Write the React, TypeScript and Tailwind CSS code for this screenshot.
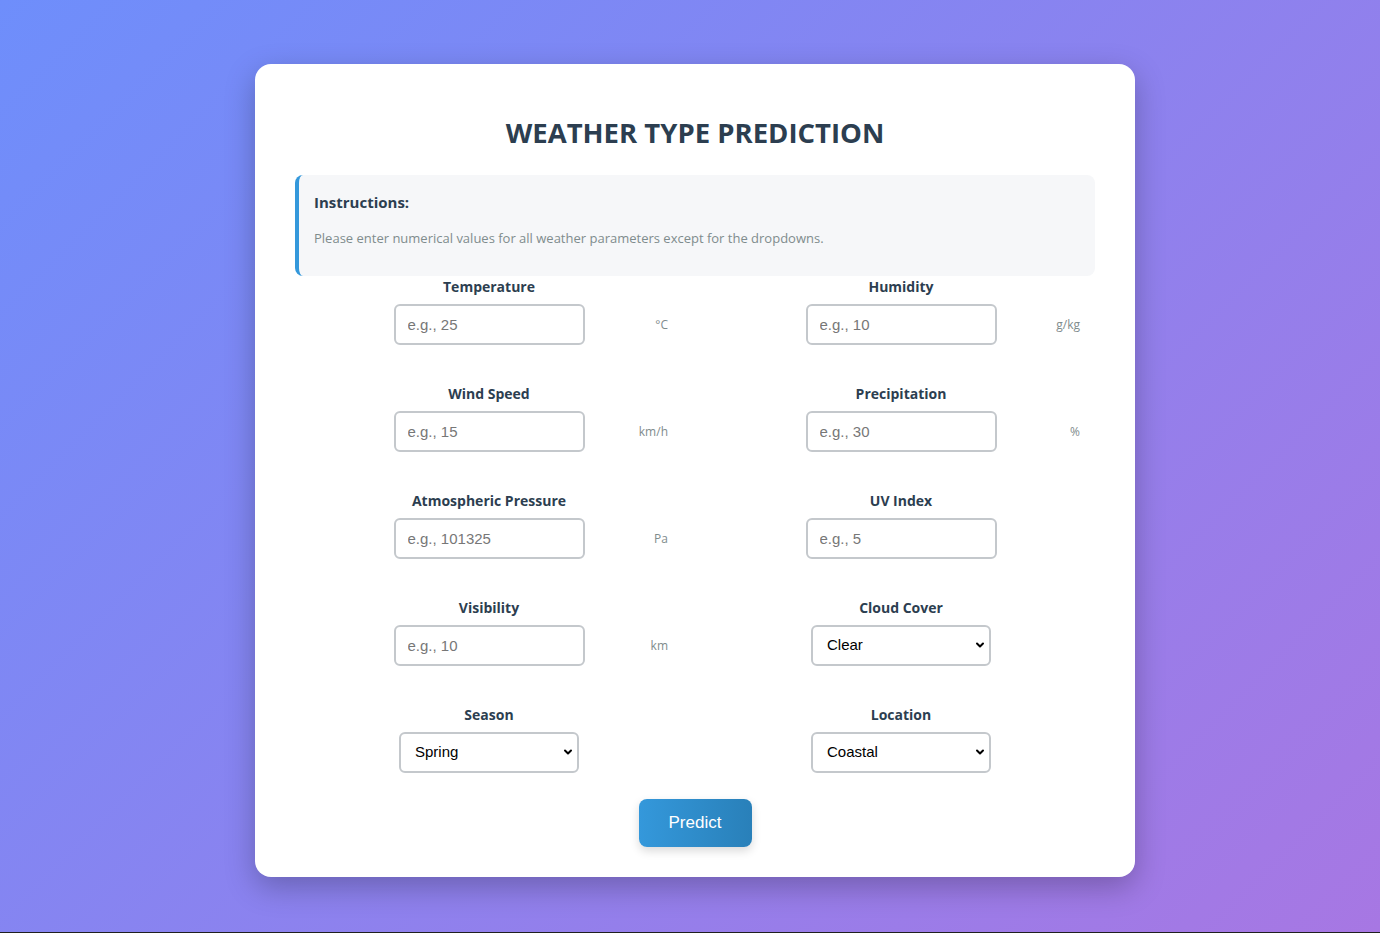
import { ChevronDown } from "lucide-react";

const fields = [
  { label: "Temperature", placeholder: "e.g., 25", unit: "°C" },
  { label: "Humidity", placeholder: "e.g., 10", unit: "g/kg" },
  { label: "Wind Speed", placeholder: "e.g., 15", unit: "km/h" },
  { label: "Precipitation", placeholder: "e.g., 30", unit: "%" },
  { label: "Atmospheric Pressure", placeholder: "e.g., 101325", unit: "Pa" },
  { label: "UV Index", placeholder: "e.g., 5", unit: "" },
  { label: "Visibility", placeholder: "e.g., 10", unit: "km" },
];

const selects = [
  { label: "Cloud Cover", options: ["Clear", "Partly Cloudy", "Cloudy", "Overcast"] },
  { label: "Season", options: ["Spring", "Summer", "Autumn", "Winter"] },
  { label: "Location", options: ["Coastal", "Inland", "Mountain"] },
];

function Label({ children }: { children: React.ReactNode }) {
  return (
    <label className="mb-[7px] block text-center text-[14px] font-bold leading-[20px] text-[#2c3e50]">
      {children}
    </label>
  );
}

function NumberField({ label, placeholder, unit }: { label: string; placeholder: string; unit: string }) {
  return (
    <div>
      <Label>{label}</Label>
      <div className="grid grid-cols-[1fr_auto_1fr] items-center">
        <div />
        <input
          type="text"
          placeholder={placeholder}
          className="h-[41px] w-[191px] rounded-[6px] border-2 border-[#c4c8cc] bg-white px-[12px] font-['Liberation_Sans',Arial,sans-serif] text-[15px] text-black outline-none placeholder:text-[#777]"
        />
        <span className="justify-self-end pr-[15px] text-[12px] text-[#7f8c8d]">{unit}</span>
      </div>
    </div>
  );
}

function SelectField({ label, options }: { label: string; options: string[] }) {
  return (
    <div>
      <Label>{label}</Label>
      <div className="flex justify-center">
        <div className="relative">
          <select className="h-[41px] w-[180px] appearance-none rounded-[6px] border-2 border-[#c4c8cc] bg-white pl-[14px] font-['Liberation_Sans',Arial,sans-serif] text-[15px] text-black outline-none">
            {options.map((o) => (
              <option key={o}>{o}</option>
            ))}
          </select>
          <ChevronDown
            className="pointer-events-none absolute right-[5px] top-[14px] h-[12px] w-[12px] text-black"
            strokeWidth={4}
          />
        </div>
      </div>
    </div>
  );
}

export default function App() {
  const [cloud, season, location] = selects;
  return (
    <div className="flex flex-col font-['Open_Sans','Noto_Sans',sans-serif]">
      <div className="h-[932px] bg-[linear-gradient(135deg,#6e8efb,#a777e3)] pl-[10px] pt-[64px]">
        <div className="mx-auto w-[880px] rounded-[16px] bg-white px-[40px] pb-[30px] pt-[52px] shadow-[0_10px_30px_rgba(0,0,0,0.25)]">
          <h1 className="text-center text-[27.5px] font-bold leading-[34px] text-[#2c3e50]">
            WEATHER TYPE PREDICTION
          </h1>
          <div className="mt-[25px] rounded-[8px] border-l-4 border-[#3498db] bg-[#f6f7f9] px-[15px] pb-[28px] pt-[17px]">
            <h3 className="text-[15px] font-bold leading-[20px] text-[#2c3e50]">Instructions:</h3>
            <p className="mt-[16px] text-[13px] leading-[20px] text-[#7f8c8d]">
              Please enter numerical values for all weather parameters except for the dropdowns.
            </p>
          </div>
          <div className="mt-[1px] grid grid-cols-2 gap-x-[24px] gap-y-[39px]">
            {fields.map((f) => (
              <NumberField key={f.label} {...f} />
            ))}
            <SelectField {...cloud} />
            <SelectField {...season} />
            <SelectField {...location} />
          </div>
          <div className="mt-[26px] flex justify-center">
            <button className="h-[48px] w-[113px] rounded-[8px] bg-[linear-gradient(90deg,#3498db,#2980b9)] font-['Liberation_Sans',Arial,sans-serif] text-[17px] text-white shadow-[0_4px_10px_rgba(0,0,0,0.15)]">
              Predict
            </button>
          </div>
        </div>
      </div>
      <div className="h-px bg-[#1f1f1f]" />
    </div>
  );
}
